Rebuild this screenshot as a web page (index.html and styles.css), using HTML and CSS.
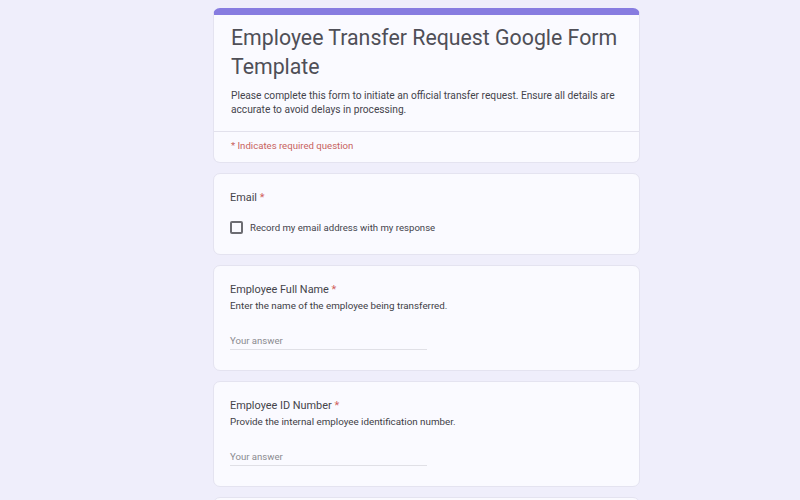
FILE: index.html
```html
<!DOCTYPE html>
<html>
<head>
<meta charset="utf-8">
<link rel="stylesheet" href="styles.css">
</head>
<body>
<div class="form">
  <div class="card header">
    <div class="header-main">
      <h1 class="title">Employee Transfer Request Google Form Template</h1>
      <p class="desc">Please complete this form to initiate an official transfer request. Ensure all details are accurate to avoid delays in processing.</p>
    </div>
    <div class="required-note">* Indicates required question</div>
  </div>

  <div class="card question email">
    <div class="q-title">Email <span class="star">*</span></div>
    <label class="check-row">
      <span class="checkbox"></span>
      <span class="check-label">Record my email address with my response</span>
    </label>
  </div>

  <div class="card question">
    <div class="q-title">Employee Full Name <span class="star">*</span></div>
    <div class="q-desc">Enter the name of the employee being transferred.</div>
    <div class="answer">Your answer</div>
  </div>

  <div class="card question">
    <div class="q-title">Employee ID Number <span class="star">*</span></div>
    <div class="q-desc">Provide the internal employee identification number.</div>
    <div class="answer">Your answer</div>
  </div>

  <div class="card question next"></div>
</div>
</body>
</html>
```

FILE: styles.css
```css
html, body {
  margin: 0;
  padding: 0;
}
body {
  background: #efeefb;
  font-family: Roboto, "Noto Sans", Arial, sans-serif;
  color: #202124;
  overflow: hidden;
  height: 500px;
}
.form {
  width: 427px;
  margin-left: 213px;
  padding-top: 8px;
  display: flex;
  flex-direction: column;
  gap: 10px;
}
.card {
  background: #fafaff;
  border: 1px solid #e4e3f0;
  border-radius: 7px;
  box-sizing: border-box;
  flex: none;
}
.header {
  border-top: 7px solid #877ce0;
  height: 155px;
}
.header-main {
  padding: 8px 10px 15px 17px;
  border-bottom: 1px solid #e2e1ec;
}
.title {
  margin: 0;
  font-size: 21.3px;
  font-weight: 400;
  line-height: 29px;
  color: #4f4f57;
}
.desc {
  margin: 8px 0 0;
  font-size: 10.2px;
  line-height: 13.5px;
  color: #44444c;
  padding-right: 7px;
}
.required-note {
  padding: 8px 17px;
  font-size: 9.6px;
  color: #c8625e;
}
.question {
  padding: 16px 16px 20px;
}
.email {
  height: 82px;
}
.q-title {
  font-size: 10.9px;
  line-height: 16px;
  color: #44444a;
}
.star {
  color: #d0605b;
}
.check-row {
  display: flex;
  align-items: center;
  gap: 7px;
  margin-top: 15px;
}
.checkbox {
  width: 9px;
  height: 9px;
  border: 2px solid #6c6c72;
  border-radius: 2px;
  flex: none;
}
.check-label {
  font-size: 9.6px;
  color: #44444c;
}
.q-desc {
  margin-top: 1px;
  font-size: 9.8px;
  line-height: 14px;
  color: #3e3e46;
}
.answer {
  margin-top: 22px;
  width: 197px;
  padding-bottom: 2px;
  line-height: 12px;
  border-bottom: 1px solid #e0e0e6;
  font-size: 9.6px;
  color: #8a8a90;
}
.next {
  height: 40px;
}
```
